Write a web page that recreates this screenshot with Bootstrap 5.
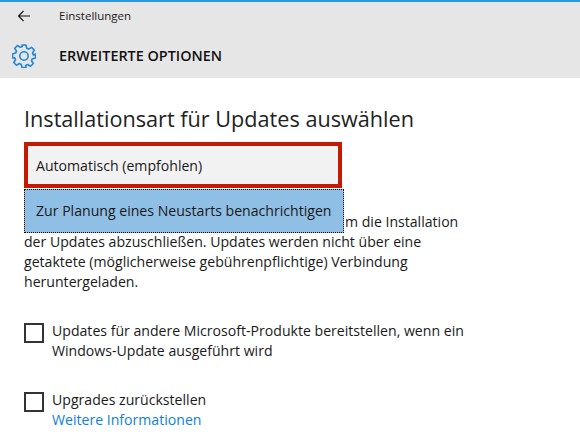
<!DOCTYPE html>
<html lang="de">
<head>
    <meta charset="UTF-8">
    <meta name="viewport" content="width=device-width, initial-scale=1.0">
    <title>Einstellungen</title>
    <link href="https://cdn.jsdelivr.net/npm/bootstrap@5.3.0/dist/css/bootstrap.min.css" rel="stylesheet" />
    <style>
        html, body {
            height: 443px;
            overflow: hidden;
        }
        body {
            background-color: #fff;
            color: #1a1a1a;
            font-family: "Open Sans", "Noto Sans", sans-serif;
            font-size: 14.1px;
            line-height: 20px;
        }
        .app-header {
            background-color: #e6e6e6;
            border-top: 2px solid #2b96e0;
            height: 78px;
        }
        .title-row {
            height: 28px;
            padding-left: 17px;
        }
        .back-label {
            font-size: 11.5px;
            margin-left: 28px;
        }
        .page-row {
            height: 32px;
            margin-top: 10px;
            padding-left: 12px;
        }
        .page-label {
            font-size: 14.4px;
            font-weight: 600;
            margin-left: 23px;
            color: #111;
        }
        .page-body {
            padding: 27px 0 0 24px;
        }
        .main-title {
            font-size: 21.65px;
            font-weight: 400;
            line-height: 28px;
            margin: 0 0 79px;
            color: #222;
        }
        .picker {
            position: absolute;
            left: 24px;
            top: 142px;
            width: 320px;
            z-index: 2;
        }
        .picker-current {
            width: 318px;
            height: 46px;
            border: 4px solid #c41a04;
            background-color: #f2f2f2;
            padding: 2px 0 0 8px;
        }
        .picker-option {
            height: 44px;
            margin-top: 1px;
            background-color: #90bfe6;
            border: 1px dotted #000;
            padding-left: 11px;
        }
        .info-text {
            margin: 0 0 29px;
        }
        /* the open dropdown covers the start of this line */
        .covered-gap {
            display: inline-block;
            width: 321px;
        }
        .check-row {
            margin-bottom: 29px;
        }
        .check-box {
            flex: 0 0 20px;
            width: 20px;
            height: 20px;
            border: 2px solid #333;
            margin: 2px 8px 0 0;
        }
        .more-link {
            color: #0f7fd8;
            text-decoration: none;
        }
    </style>
</head>
<body>
    <header class="app-header">
        <div class="title-row d-flex align-items-center">
            <svg width="14" height="12" viewBox="0 0 14 12" fill="none" stroke="#111" stroke-width="1.1">
                <path d="M13 6H1.5M6.500 1 1.500 6l5 5"/>
            </svg>
            <span class="back-label">Einstellungen</span>
        </div>
        <div class="page-row d-flex align-items-center">
            <svg width="24" height="24" viewBox="0 0 24 24" fill="none" stroke="#1f87dc" stroke-width="1.6" stroke-linejoin="round">
                <circle cx="12" cy="12" r="4.2"/>
                <path d="M10 1h4l.7 3.200 2 .9 2.800-1.800 2.800 2.800-1.800 2.800.9 2L23.500 10v4l-3.100.7-.9 2 1.800 2.800-2.800 2.800-2.800-1.800-2 .9L14 23.500h-4l-.7-3.100-2-.9-2.800 1.800-2.800-2.800 1.800-2.800-.9-2L.5 14v-4l3.100-.9.9-2-1.800-2.800 2.800-2.800 2.800 1.800 2-.9z"/>
            </svg>
            <span class="page-label">ERWEITERTE OPTIONEN</span>
        </div>
    </header>

    <main class="page-body">
        <h1 class="main-title">Installationsart für Updates auswählen</h1>

        <div class="picker">
            <div class="picker-current d-flex align-items-center">Automatisch (empfohlen)</div>
            <div class="picker-option d-flex align-items-center">Zur Planung eines Neustarts benachrichtigen</div>
        </div>

        <p class="info-text"><span class="covered-gap"></span>m die Installation<br>der Updates abzuschließen. Updates werden nicht über eine<br>getaktete (möglicherweise gebührenpflichtige) Verbindung<br>heruntergeladen.</p>

        <div class="check-row d-flex">
            <div class="check-box"></div>
            <div>Updates für andere Microsoft-Produkte bereitstellen, wenn ein<br>Windows-Update ausgeführt wird</div>
        </div>
        <div class="check-row d-flex">
            <div class="check-box"></div>
            <div>Upgrades zurückstellen<br><a class="more-link" href="#">Weitere Informationen</a></div>
        </div>
    </main>

    <script src="https://cdn.jsdelivr.net/npm/bootstrap@5.3.0/dist/js/bootstrap.bundle.min.js"></script>
</body>
</html>
